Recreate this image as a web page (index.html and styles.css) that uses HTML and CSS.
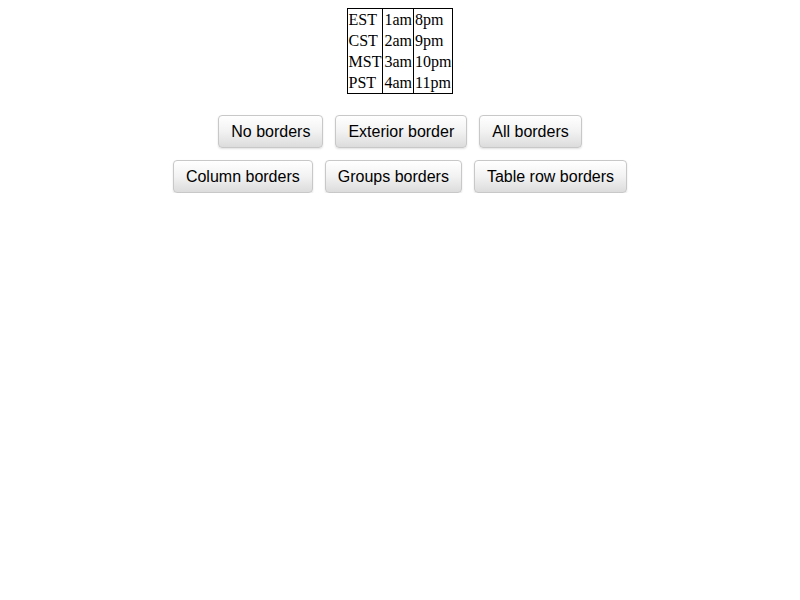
FILE: index.html
```html
<!DOCTYPE html>
<html>
<head>
<meta charset="utf-8">
<link rel="stylesheet" href="styles.css">
</head>
<body>
<table class="tz">
  <tr><td>EST</td><td>1am</td><td>8pm</td></tr>
  <tr><td>CST</td><td>2am</td><td>9pm</td></tr>
  <tr><td>MST</td><td>3am</td><td>10pm</td></tr>
  <tr><td>PST</td><td>4am</td><td>11pm</td></tr>
</table>
<div class="controls">
  <div class="row">
    <button class="btn">No borders</button>
    <button class="btn">Exterior border</button>
    <button class="btn">All borders</button>
  </div>
  <div class="row">
    <button class="btn">Column borders</button>
    <button class="btn">Groups borders</button>
    <button class="btn">Table row borders</button>
  </div>
</div>
</body>
</html>
```
FILE: styles.css
```css
body {
  margin: 8px;
  font-family: "Liberation Serif", serif;
  font-size: 16px;
  color: #000;
  background: #fff;
}
.tz {
  margin: 0 auto;
  border-collapse: collapse;
  border: 1px solid #000;
}
.tz td {
  border-left: 1px solid #000;
  padding: 2px 1px 1px 1px;
  line-height: 18px;
  text-align: left;
}
.tz td:first-child {
  border-left: none;
}
.controls {
  margin-top: 21px;
  display: flex;
  flex-direction: column;
  align-items: center;
  gap: 12px;
}
.row {
  display: flex;
  gap: 12px;
  justify-content: center;
}
.btn {
  font-family: "Liberation Sans", Arial, sans-serif;
  font-size: 16px;
  line-height: 18px;
  color: #000;
  padding: 7px 12px 6px;
  border: 1px solid #c8c8c8;
  border-radius: 4px;
  background: linear-gradient(to bottom, #ffffff 0%, #f2f2f2 50%, #dcdcdc 100%);
  box-shadow: 0 1px 2px rgba(0,0,0,0.12);
  margin: 0;
}
```
